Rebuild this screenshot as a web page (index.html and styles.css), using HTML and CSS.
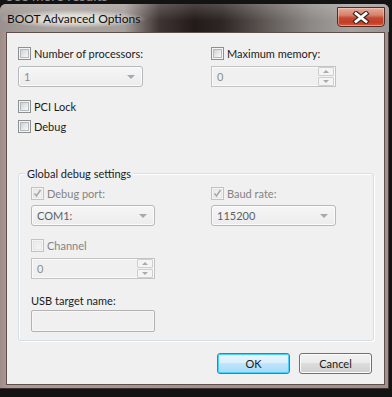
FILE: index.html
```html
<!DOCTYPE html>
<html>
<head>
<meta charset="utf-8">
<title>BOOT Advanced Options</title>
<link rel="stylesheet" href="styles.css">
</head>
<body>
<div class="behind"><span>See more results</span></div>
<div class="window">
  <div class="titlebar">
    <span class="title">BOOT Advanced Options</span>
    <div class="close">
      <svg width="18" height="13" viewBox="0 0 18 13">
        <path d="M4 2.5 L14 10.5 M14 2.5 L4 10.5" stroke="#3a2622" stroke-width="5" stroke-linecap="square" fill="none"/>
        <path d="M4 2.5 L14 10.5 M14 2.5 L4 10.5" stroke="#ffffff" stroke-width="2.8" stroke-linecap="square" fill="none"/>
      </svg>
    </div>
  </div>
  <div class="frame">
    <div class="client">
      <div class="top-grid">
        <div class="col">
          <label class="chk"><span class="box"></span><span class="lbl">Number of processors:</span></label>
          <div class="combo dis w125"><span class="val light">1</span><span class="arrow"></span></div>
        </div>
        <div class="col">
          <label class="chk"><span class="box"></span><span class="lbl">Maximum memory:</span></label>
          <div class="spin w125"><span class="val light">0</span>
            <div class="spinbtns"><span class="sb up"></span><span class="sb down"></span></div>
          </div>
        </div>
      </div>
      <label class="chk pci"><span class="box"></span><span class="lbl">PCI Lock</span></label>
      <label class="chk dbg"><span class="box"></span><span class="lbl">Debug</span></label>

      <div class="group">
        <span class="legend">Global debug settings</span>
        <div class="g-grid">
          <div class="col">
            <label class="chk disabled"><span class="box checked"><svg width="9" height="9" viewBox="0 0 9 9"><path d="M1.5 4.5 L3.5 7 L7.5 1" stroke="#a8a8a8" stroke-width="1.6" fill="none"/></svg></span><span class="lbl">Debug port:</span></label>
            <div class="combo dis w124"><span class="val">COM1:</span><span class="arrow"></span></div>
          </div>
          <div class="col">
            <label class="chk disabled"><span class="box checked"><svg width="9" height="9" viewBox="0 0 9 9"><path d="M1.5 4.5 L3.5 7 L7.5 1" stroke="#a8a8a8" stroke-width="1.6" fill="none"/></svg></span><span class="lbl">Baud rate:</span></label>
            <div class="combo dis w125"><span class="val">115200</span><span class="arrow"></span></div>
          </div>
        </div>
        <label class="chk disabled chan"><span class="box"></span><span class="lbl">Channel</span></label>
        <div class="spin w124 chanspin"><span class="val light">0</span>
          <div class="spinbtns"><span class="sb up"></span><span class="sb down"></span></div>
        </div>
        <div class="usb-lbl">USB target name:</div>
        <div class="textbox"></div>
      </div>

      <div class="buttons">
        <button class="btn default">OK</button>
        <button class="btn">Cancel</button>
      </div>
    </div>
  </div>
</div>
</body>
</html>
```

FILE: styles.css
```css
html, body {
  margin: 0;
  padding: 0;
}
body {
  width: 392px;
  height: 397px;
  overflow: hidden;
  background: #141313;
  font-family: "Segoe UI", Lato, "Noto Sans", sans-serif;
  font-size: 11px;
  color: #1b1b1b;
}
.behind {
  height: 4px;
  overflow: hidden;
  padding-left: 6px;
  color: #8f8f8f;
  font-size: 14px;
}
.behind span {
  display: block;
  margin-top: -12px;
  line-height: 16px;
}
.window {
  width: 389px;
  height: 385px;
  display: flex;
  flex-direction: column;
  background: linear-gradient(90deg, #a08c88 0, #ad9a96 2%, #a4908c 50%, #a28e8a 100%);
  border-radius: 6px 6px 0 0;
  box-shadow: inset 0 -1px 0 #3e3331, inset -1px 0 0 #4a3e3b;
}
.titlebar {
  height: 28px;
  flex: none;
  display: flex;
  align-items: flex-start;
  border-radius: 6px 6px 0 0;
  background:
    linear-gradient(180deg, rgba(255,255,255,0.18) 0, rgba(255,255,255,0) 60%),
    linear-gradient(90deg, #9a928e 0%, #aaa4a0 14%, #a49d99 32%, #3e3533 41%, #231b1a 50%, #2d2624 57%, #5e5754 68%, #8d8987 80%, #a4a19f 90%, #9a9694 100%);
}
.title {
  margin: 6px 0 0 1px;
  padding: 0 6px;
  font-size: 12px;
  line-height: 18px;
  color: #0e0e0e;
  background: radial-gradient(ellipse at center, rgba(235,232,228,0.85) 30%, rgba(235,232,228,0) 72%);
}
.close {
  margin: 3px 4px 0 auto;
  width: 48px;
  height: 20px;
  box-sizing: border-box;
  border: 1px solid #5a2a22;
  border-radius: 0 0 4px 4px;
  background: linear-gradient(180deg, #e6ad9c 0%, #d7806a 40%, #c54a32 55%, #c13d25 80%, #d4603f 100%);
  box-shadow: inset 0 0 0 1px rgba(255,220,210,0.45);
  display: flex;
  align-items: center;
  justify-content: center;
}
.frame {
  flex: 1;
  display: flex;
  padding: 0 4px 4px 6px;
}
.client {
  flex: 1;
  background: #f0f0f0;
  border: 1px solid #5d504d;
  padding: 14px 10px 0 11px;
}
.top-grid {
  display: grid;
  grid-template-columns: 193px 125px;
}
.g-grid {
  display: grid;
  grid-template-columns: 180px 125px;
}
.col {
  display: flex;
  flex-direction: column;
}
.chk {
  display: flex;
  align-items: center;
  height: 13px;
  line-height: 13px;
  white-space: nowrap;
}
.box {
  width: 13px;
  height: 13px;
  box-sizing: border-box;
  border: 1px solid #8e8f8f;
  background: #f4f4f4;
  padding: 1px;
  flex: none;
  margin-right: 3px;
}
.box::before {
  content: "";
  display: block;
  width: 9px;
  height: 9px;
  box-sizing: border-box;
  border: 1px solid #b4b9be;
  background: linear-gradient(135deg, #cdd1d6 0%, #e4e6e8 50%, #f7f7f7 100%);
}
.chk.disabled .lbl {
  color: #838383;
}
.chk.disabled .box {
  border-color: #c2c2c2;
  background: #f4f4f4;
}
.chk.disabled .box::before {
  border-color: #e6e6e6;
  background: linear-gradient(135deg, #eaeaea, #f5f5f5);
}
.box.checked {
  position: relative;
}
.box.checked svg {
  position: absolute;
  left: 1px;
  top: 1px;
}
.combo, .spin {
  margin-top: 6px;
  height: 21px;
  box-sizing: border-box;
  display: flex;
  align-items: center;
  padding-left: 5px;
}
.w125 { width: 125px; }
.w124 { width: 124px; }
.combo {
  border: 1px solid #b6b9bb;
  border-radius: 3px;
  background: linear-gradient(180deg, #f6f6f6 0, #f1f1f1 50%, #ececec 100%);
  box-shadow: inset 0 0 0 1px #fbfbfb;
}
.val {
  flex: 1;
  color: #5c6166;
}
.val.light {
  color: #8d8d8d;
}
.arrow {
  width: 0;
  height: 0;
  border-left: 4px solid transparent;
  border-right: 4px solid transparent;
  border-top: 4px solid #a9a9a9;
  margin-right: 7px;
}
.spin {
  border: 1px solid #c3c3c3;
  background: #f0f0f0;
  box-shadow: inset 0 0 0 1px #fafafa;
  padding-right: 1px;
}
.spinbtns {
  display: flex;
  flex-direction: column;
  gap: 1px;
  height: 19px;
  justify-content: center;
}
.sb {
  width: 16px;
  height: 9px;
  box-sizing: border-box;
  border: 1px solid #cfcfcf;
  border-radius: 1px;
  background: #f4f4f4;
  display: flex;
  align-items: center;
  justify-content: center;
}
.sb::before {
  content: "";
  width: 0;
  height: 0;
  border-left: 3px solid transparent;
  border-right: 3px solid transparent;
}
.sb.up::before { border-bottom: 3px solid #a9a9a9; }
.sb.down::before { border-top: 3px solid #a9a9a9; }
.pci { margin-top: 13px; }
.dbg { margin-top: 7px; }
.group {
  margin-top: 40px;
  padding: 0 0 0 12px;
  width: 356px;
  height: 168px;
  box-sizing: border-box;
  border: 1px solid #d5dfe5;
  border-radius: 3px;
  box-shadow: inset 1px 1px 0 #ffffff, 1px 1px 0 #ffffff;
}
.legend {
  display: block;
  width: fit-content;
  margin: -8px 0 0 -6px;
  padding: 0 2px;
  background: #f0f0f0;
  color: #1b1b1b;
  line-height: 15px;
}
.g-grid { margin-top: 6px; }
.g-grid .combo { margin-top: 5px; }
.chan { margin-top: 13px; }
.chanspin { margin-top: 6px; }
.usb-lbl {
  margin-top: 14px;
  line-height: 15px;
}
.textbox {
  margin-top: 2px;
  width: 124px;
  height: 22px;
  box-sizing: border-box;
  border: 1px solid #b3b3b3;
  border-radius: 2px;
  background: #f0f0f0;
  box-shadow: inset 0 0 0 1px #f7f7f7;
}
.buttons {
  margin-top: 12px;
  padding-right: 2px;
  display: flex;
  justify-content: flex-end;
  gap: 9px;
}
.btn {
  width: 73px;
  height: 21px;
  box-sizing: border-box;
  font-family: inherit;
  font-size: 11px;
  color: #1b1b1b;
  border: 1px solid #707070;
  border-radius: 3px;
  padding: 0;
  background: linear-gradient(180deg, #f2f2f2 0%, #ebebeb 45%, #dddddd 50%, #cfcfcf 100%);
  box-shadow: inset 0 0 0 1px #fcfcfc;
}
.btn.default {
  border-color: #3c7fb1;
  background: linear-gradient(180deg, #eaf6fd 0%, #d9f0fc 45%, #bee6fd 50%, #a7d9f5 100%);
  box-shadow: inset 0 0 0 1px #48d2fb;
}
```
